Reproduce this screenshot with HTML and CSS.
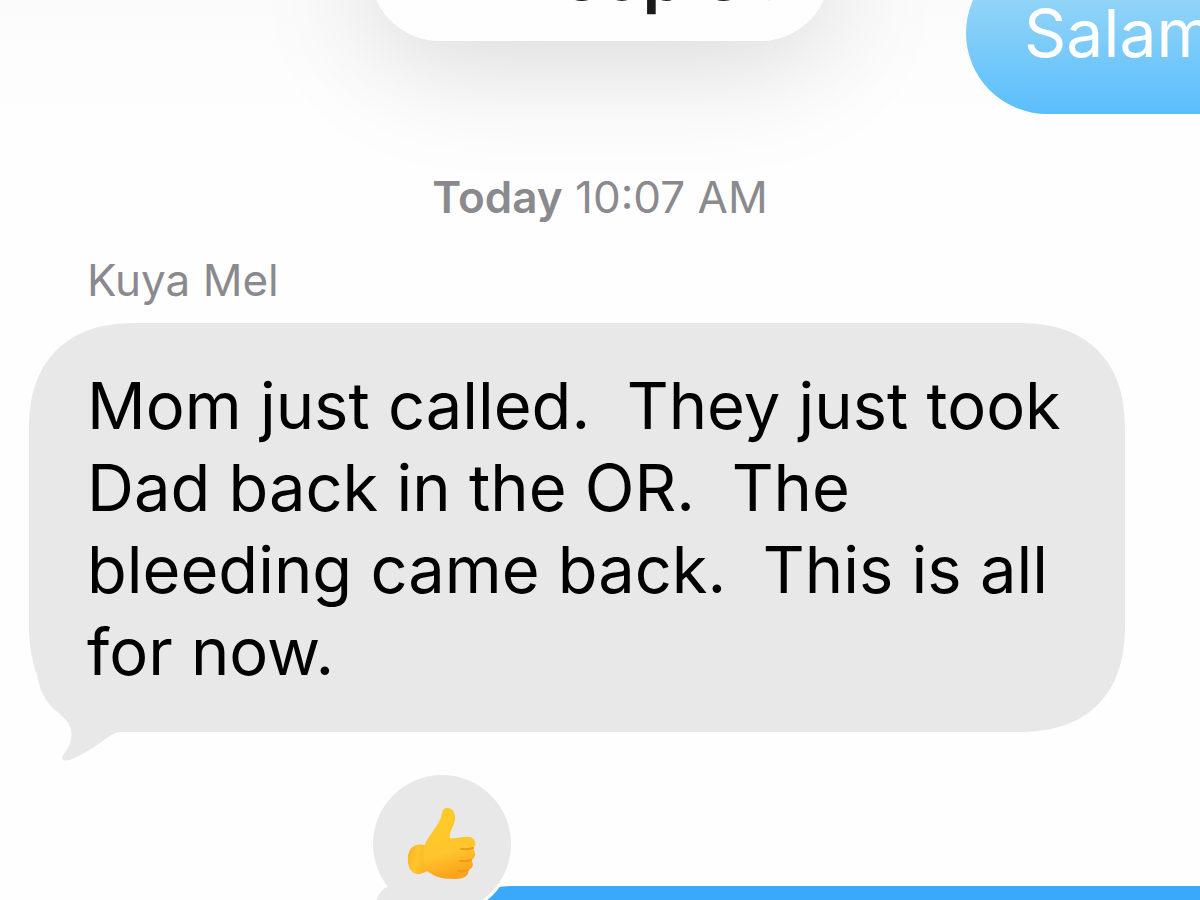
FILE: index.html
```
<!DOCTYPE html>
<html lang="en">
<head>
<meta charset="utf-8">
<meta name="viewport" content="width=device-width, initial-scale=1">
<title>Messages</title>
<link rel="stylesheet" href="styles.css">
</head>
<body>
<main class="chat">
  <header class="top">
    <button class="group" type="button"><span>11 People</span>
      <svg class="chevron" viewBox="0 0 24 56" aria-hidden="true"><path d="M4 4 20 28 4 52"/></svg>
    </button>
    <p class="sent">Salamat</p>
  </header>
  <p class="stamp"><strong>Today</strong> <time>10:07 AM</time></p>
  <section class="message">
    <h2 class="sender">Kuya Mel</h2>
    <div class="bubble">
      <svg class="tail" viewBox="0 0 100 80" aria-hidden="true"><path d="M8 -10C9 8 17 21 26 29C34 36 42 41 42.500 53C42.500 64 37 70 33.500 75C32 79 37 81 42 78.500C55 73 64 67 75 59C82 54 86 51 93 51L110 51L110 -10Z"/></svg>
      <p class="text">Mom just called.  They just took
Dad back in the OR.  The
bleeding came back.  This is all
for now.</p>
    </div>
  </section>
  <div class="reply">
    <div class="sent-next"></div>
    <div class="reaction" role="img" aria-label="Thumbs up">
      <svg class="thumb" viewBox="0 0 72 76" aria-hidden="true">
        <defs>
          <linearGradient id="skin" x1="0" y1="0" x2="0.200" y2="1"><stop offset="0" stop-color="#ffcb25"/><stop offset="0.700" stop-color="#ffc52d"/><stop offset="1" stop-color="#fba51c"/></linearGradient>
          <linearGradient id="wrist" x1="0" y1="0" x2="1" y2="0.300"><stop offset="0" stop-color="#ffb01f"/><stop offset="0.500" stop-color="#ffc52d"/><stop offset="1" stop-color="#fbb122"/></linearGradient>
        </defs>
        <path fill="url(#wrist)" d="M20 40C14 37 4 38 2 50C1 61 5 69 14 68C18 67 20 65 23 65Z"/>
        <path fill="url(#skin)" d="M18 41C22 28 34 20 36 7C37-1 48 0 49 10C50 19 42 26 44 32C51 33 58 30 63 31C70 32 71 39 67 43C71 47 69 53 65 54C69 59 66 63 62 64C64 71 56 73 47 73C34 73 28 70 21 65C17 58 17 49 18 41Z"/>
        <path fill="none" stroke="#f09a18" stroke-width="2" stroke-linecap="round" d="M67 42C62 44 58 43 55 43M65 54C60 56 57 55 54 55M62 64C58 66 55 65 52 65"/>
      </svg>
    </div>
  </div>
</main>
</body>
</html>
```

FILE: styles.css
```
* { box-sizing: border-box; }
body { margin: 0; background: #fefefe; color: #000; font-family: Inter, "Liberation Sans", sans-serif; }
p, h2 { margin: 0; }
.chat { height: 100vh; overflow: hidden; display: flex; flex-direction: column; background: linear-gradient(#fbfbfb, #fefefe 120px); }
.top { display: grid; grid-template-columns: 1fr 460px 1fr; align-items: end; height: 114px; flex: none; }
.group { grid-column: 2; align-self: start; margin-top: -99px; height: 140px; border: 0; border-radius: 70px; background: #fefefe; box-shadow: 0 20px 120px rgba(0, 0, 0, 0.15); font: 600 68px/84px Inter, sans-serif; color: #1a1a1a; display: flex; align-items: center; justify-content: center; gap: 20px; padding: 8px 0 0 30px; white-space: nowrap; }
.chevron { width: 24px; height: 56px; fill: none; stroke: #bbb; stroke-width: 6; }
.sent { grid-column: 3; margin-left: 136px; padding: 40px 58px; border-radius: 82px 0 0 82px; background: linear-gradient(#a6dff6 10%, #8fd3f7 32%, #5abefc); color: #fefefe; font-size: 66px; line-height: 82px; white-space: nowrap; overflow: hidden; }
.stamp { margin-top: 56px; text-align: center; color: #8a8a8e; font-size: 44px; line-height: 54px; }
.stamp strong { font-weight: 600; }
.message { margin: 29px 75px 0 29px; }
.sender { padding-left: 58px; color: #8a8a8e; font-weight: 400; font-size: 44px; line-height: 54px; }
.bubble { position: relative; margin-top: 16px; padding: 42px 56px 39px 58px; border-radius: 92px; background: #e8e8e8; }
.text { position: relative; font-size: 65px; line-height: 82px; white-space: pre; }
.tail { position: absolute; left: 0; bottom: -29px; width: 100px; height: 80px; fill: #e8e8e8; overflow: visible; }
.reply { display: grid; margin-top: 43px; padding-left: 373px; }
.reaction { grid-area: 1 / 1; position: relative; width: 138px; height: 138px; border-radius: 50%; background: #e8e8e8; box-shadow: 0 0 0 3px #fefefe; display: grid; place-items: center; }
.reaction::after { content: ""; position: absolute; left: 3px; bottom: -12px; width: 40px; height: 40px; border-radius: 50%; background: #e8e8e8; }
.thumb { width: 72px; height: 76px; }
.sent-next { grid-area: 1 / 1; margin: 111px 0 0 30px; height: 150px; border-radius: 110px 0 0 0; background: #3aa9fb; }

@supports (corner-shape: superellipse(1.25)) {
  .bubble { border-radius: 108px; corner-shape: superellipse(1.25); }
}
```
